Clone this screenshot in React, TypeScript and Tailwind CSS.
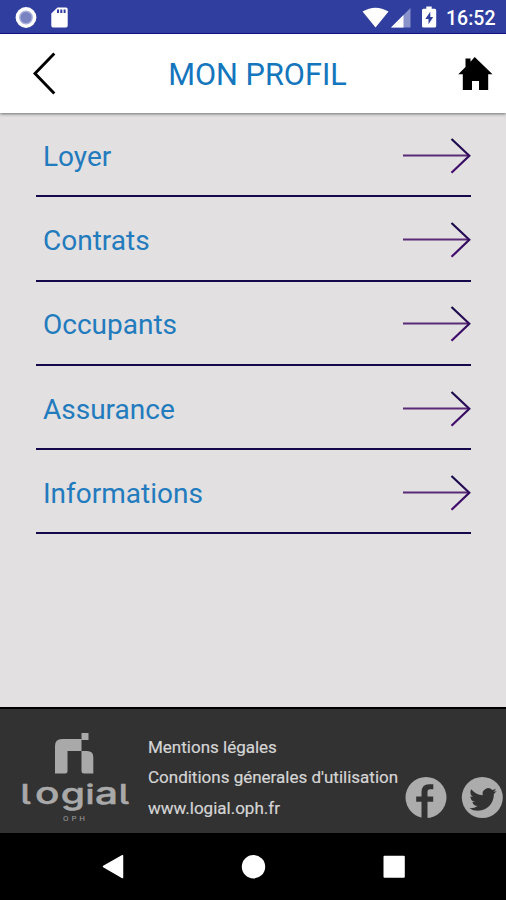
const rows = ['Loyer', 'Contrats', 'Occupants', 'Assurance', 'Informations'];

function StatusBar() {
  return (
    <div className="flex h-[34px] items-center border-b border-[#17158e] bg-[#303f9f]">
      <svg width="80" height="33" viewBox="0 0 80 33" className="block">
        <circle cx="26" cy="17.500" r="10.400" fill="#fff" />
        <circle cx="26" cy="17.500" r="6.200" fill="#7983c2" />
        <circle cx="26" cy="17.500" r="6.200" fill="none" stroke="#a9b0da" strokeWidth="1.400" />
        <path d="M57.500 7.500H66a1.700 1.700 0 0 1 1.700 1.700v16.600a1.700 1.700 0 0 1-1.700 1.700H53a1.700 1.700 0 0 1-1.700-1.700V13.500z" fill="#fff" />
        <path d="M57 9.500h2v3.500h-2zM60.300 9.500h2v3.500h-2zM63.600 9.500h2v3.500h-2z" fill="#303f9f" />
      </svg>
      <svg width="84" height="33" viewBox="360 0 84 33" className="ml-auto block">
        <path d="M362.500 11.500Q375.500 3.800 388.500 11.500L375.500 27.500z" fill="#fff" />
        <path d="M410.500 8v19.500H391z" fill="#8992cb" />
        <path d="M403.500 15v12.500H391z" fill="#fff" />
        <path d="M426.300 6.500h5.400v2.200h3a1.500 1.500 0 0 1 1.500 1.500v15.800a1.500 1.500 0 0 1-1.500 1.500h-11.200a1.500 1.500 0 0 1-1.500-1.500V10.200a1.500 1.500 0 0 1 1.500-1.500h2.800z" fill="#fff" />
        <path d="M430.300 11.800l-5 7.200h3.200v5.300l4.700-7.400h-2.900z" fill="#303f9f" />
      </svg>
      <span className="w-[62px] pt-[3px] pl-[2px] text-[19.500px] leading-[33px] font-medium whitespace-nowrap text-white">16:52</span>
    </div>
  );
}

function Header() {
  return (
    <header className="relative flex h-[79px] items-center justify-between bg-white pr-[13px] pl-[32px] shadow-[0_1px_3px_rgba(0,0,0,0.5)]">
      <svg width="26" height="44" viewBox="32 52 26 44" className="block">
        <path d="M54.300 53.500L35 73.500l19.300 20" fill="none" stroke="#000" strokeWidth="2.900" />
      </svg>
      <h1 className="mr-[1px] pt-[3px] text-[30.700px] leading-[36px] font-normal whitespace-nowrap text-[#1476bd]">MON PROFIL</h1>
      <svg width="35" height="36" viewBox="458 56 35 36" className="block">
        <path d="M458.300 74.200L465.500 67V58.500h5v3.200l4.200-4.700 17.800 17.200h-4.300V90h-9.200v-9h-7v9h-9.200V74.200z" fill="#000" />
      </svg>
    </header>
  );
}

function Arrow() {
  return (
    <svg width="70" height="38" viewBox="0 0 70 38" className="block">
      <defs>
        <linearGradient id="arrowHead" x1="0" y1="0" x2="0" y2="1">
          <stop offset="0" stopColor="#170a48" />
          <stop offset="1" stopColor="#480e70" />
        </linearGradient>
      </defs>
      <path d="M2 18.500H68" stroke="#5a2a77" strokeWidth="2.200" fill="none" />
      <path d="M50.500 2L68.300 18.800 50.500 35.800" stroke="url(#arrowHead)" strokeWidth="2.200" fill="none" />
    </svg>
  );
}

function Logo() {
  return (
    <svg width="116" height="96" viewBox="20 728 116 96" className="mt-[10px] block shrink-0" fill="#a9a9a9">
      <path d="M55 773.500V746q0-7 7-7H81.500V751H67.500V771q0 2.500-2.500 2.500z" />
      <path d="M81.500 733H88.500V740H81.500z" />
      <path d="M81.500 751H87q6.300 0 6.300 6.300V773.500H84q-2.500 0-2.500-2.500z" />
      <text transform="translate(0 804) scale(1.350 1)" y="0" fontSize="30" stroke="#a9a9a9" strokeWidth=".5" className="font-[Inter,sans-serif] font-medium [font-feature-settings:'cv05']">
        <tspan x="15.200" fontSize="26.500">l</tspan>
        <tspan x="25.900">o</tspan>
        <tspan x="45" fontSize="29">g</tspan>
        <tspan x="63.300" fontSize="26.500">i</tspan>
        <tspan x="70.300">a</tspan>
        <tspan x="87.900" fontSize="26.500">l</tspan>
      </text>
      <text x="63" y="820.500" fontSize="8" textLength="22" className="font-[Roboto,sans-serif]" fill="#9a9a9a">OPH</text>
    </svg>
  );
}

function Socials() {
  return (
    <svg width="100" height="44" viewBox="404 776 100 44" className="mt-[54px] ml-auto block shrink-0">
      <circle cx="426" cy="797.500" r="20.500" fill="#acacac" />
      <path d="M421.500 819V801.800h-5.300v-5.300h5.300v-4.300q0-8 7.500-8h4.300v5h-3.300q-2.500 0-2.500 2.700v4.600h5.700v5.300h-5.700V819z" fill="#323232" />
      <circle cx="482.300" cy="797.500" r="20.500" fill="#acacac" />
      <path transform="translate(469.300 785.600) scale(1.140 1.160)" fill="#323232" d="M23.953 4.570a10 10 0 0 1-2.825.775 4.958 4.958 0 0 0 2.163-2.723c-.951.555-2.005.959-3.127 1.184a4.920 4.920 0 0 0-8.384 4.482C7.690 8.095 4.067 6.130 1.640 3.162a4.822 4.822 0 0 0-.666 2.475c0 1.710.870 3.213 2.188 4.096a4.904 4.904 0 0 1-2.228-.616v.060a4.923 4.923 0 0 0 3.946 4.827 4.996 4.996 0 0 1-2.212.085 4.936 4.936 0 0 0 4.604 3.417 9.867 9.867 0 0 1-6.102 2.105c-.390 0-.779-.023-1.170-.067a13.995 13.995 0 0 0 7.557 2.209c9.053 0 13.998-7.496 13.998-13.985 0-.210 0-.420-.015-.630A9.935 9.935 0 0 0 24 4.590z" />
    </svg>
  );
}

export default function App() {
  return (
    <div className="flex h-[900px] w-[506px] flex-col overflow-hidden bg-[#e2e0e1] font-[Roboto,sans-serif]">
      <StatusBar />
      <Header />
      <main className="flex-1 pr-[35px] pl-[36px]">
        {rows.map((row) => (
          <div key={row} className="flex h-[84.300px] items-center justify-between border-b-2 border-[#15094c] pl-[7px]">
            <span className="pt-[5.500px] text-[28px] leading-[34px] text-[#227bbd]">{row}</span>
            <div className="pt-[3px]"><Arrow /></div>
          </div>
        ))}
      </main>
      <footer className="flex h-[126px] items-center border-t-2 border-black bg-[#323232] pr-[2px] pl-[20px]">
        <Logo />
        <div className="ml-[12px] pt-[13px] text-[17px] leading-[30.300px] whitespace-nowrap text-[#d5d5d5] [-webkit-text-stroke:0.2px_#d5d5d5]">
          <p>Mentions légales</p>
          <p>Conditions génerales d'utilisation</p>
          <p>www.logial.oph.fr</p>
        </div>
        <Socials />
      </footer>
      <nav className="flex h-[67px] bg-black">
        <svg width="506" height="67" viewBox="0 833 506 67" className="block" fill="#fff">
          <path d="M103.500 866.500L122.500 855.700V877.500z" stroke="#fff" strokeWidth="1.500" strokeLinejoin="round" />
          <circle cx="253.500" cy="866.700" r="11.700" />
          <rect x="383.500" y="855.700" width="21.300" height="22" rx="1" />
        </svg>
      </nav>
    </div>
  );
}
